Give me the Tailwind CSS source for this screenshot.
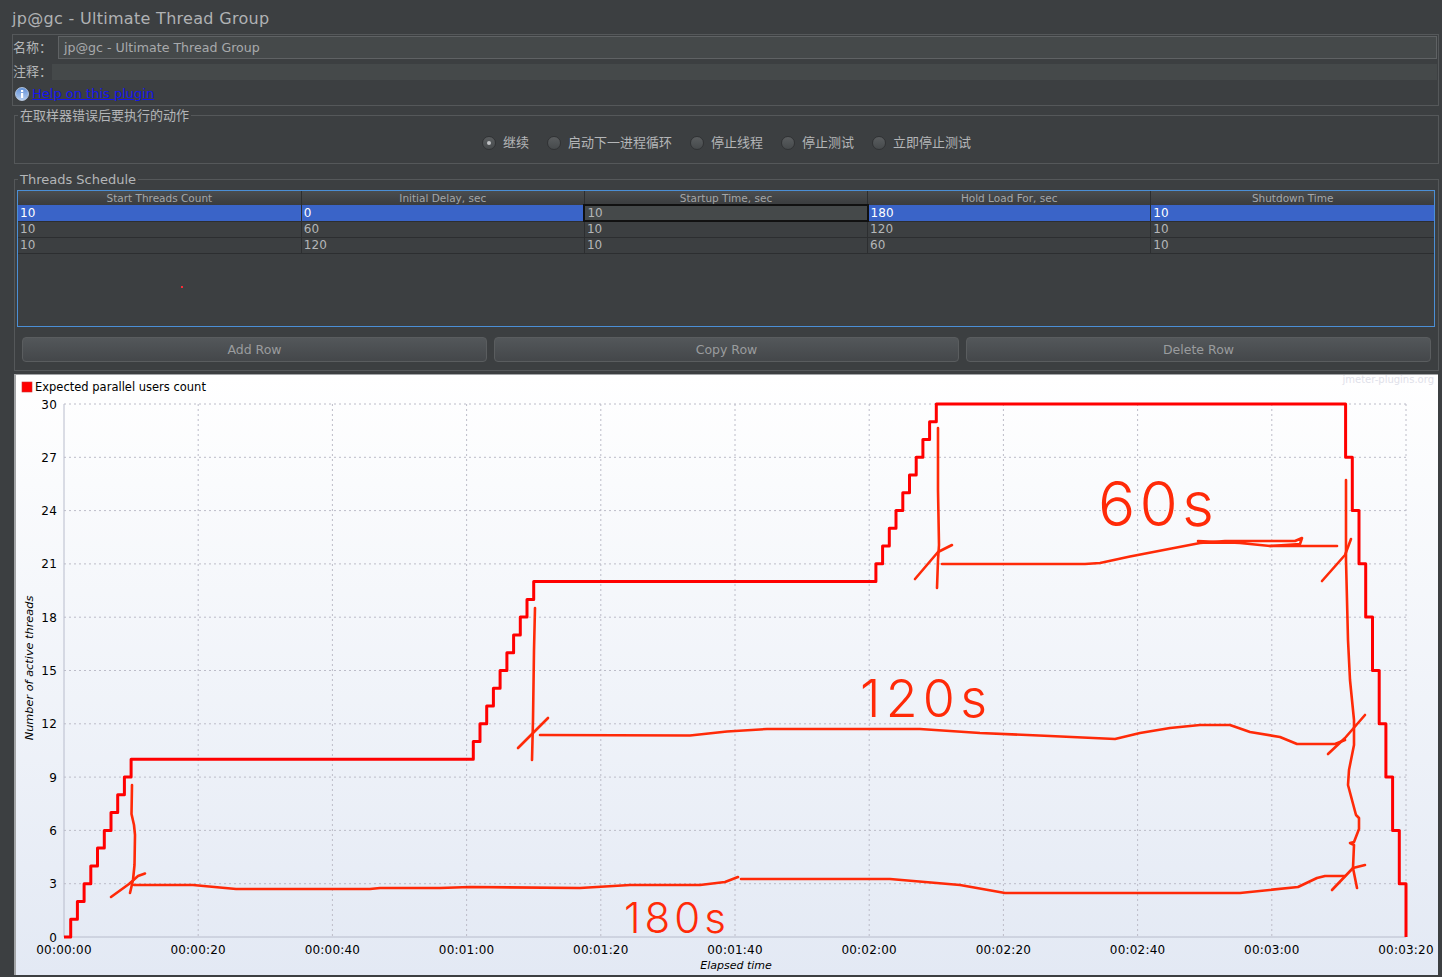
<!DOCTYPE html>
<html lang="zh">
<head>
    <meta charset="UTF-8">
    <title>jp@gc - Ultimate Thread Group</title>
    <script src="https://cdn.jsdelivr.net/npm/@tailwindcss/browser@4"></script>
</head>
<body class="w-[1442px] h-[977px] overflow-hidden bg-[#3c3f41] text-[#b4b6b8] font-['DejaVu_Sans','Noto_Sans_CJK_SC',sans-serif]">

    <!-- Title -->
    <div class="h-[34px] pl-3 pt-[3px] flex items-center text-[16px] tracking-[0.3px] text-[#b0b2b4]">jp@gc - Ultimate Thread Group</div>

    <!-- Name / comment -->
    <div class="ml-3 mr-[3px] h-[72px] border border-[#55585a] text-[13px]">
        <div class="flex items-center h-[25px] pr-px">
            <span class="w-[45px] shrink-0">名称：</span>
            <div class="flex-1 h-[23px] flex items-center pl-[5px] pt-px bg-[#45494a] border border-[#5f6264] text-[12.6px] text-[#a8aaac]">jp@gc - Ultimate Thread Group</div>
        </div>
        <div class="flex items-center h-[23px] pr-px">
            <span class="w-[39px] shrink-0">注释：</span>
            <div class="flex-1 h-4 bg-[#45494a]"></div>
        </div>
        <div class="flex items-center h-[22px] pl-[2px] gap-[3px]">
            <svg viewBox="0 0 14 14" class="w-[14px] h-[14px]">
                <defs><linearGradient id="info" x1="0" y1="0" x2="0" y2="1"><stop offset="0" stop-color="#5f8fd8"/><stop offset="1" stop-color="#b5cdee"/></linearGradient></defs>
                <circle cx="7" cy="7" r="6.5" fill="url(#info)" stroke="#c5d4ea" stroke-width="0.8"/>
                <rect x="6" y="6" width="2.2" height="5" fill="#fff"/>
                <rect x="6" y="3" width="2.2" height="2" fill="#fff"/>
            </svg>
            <a href="#" class="text-[#1414ee] underline">Help on this plugin</a>
        </div>
    </div>

    <!-- Action on sampler error -->
    <fieldset class="ml-[14px] mr-[3px] h-[57px] border border-[#55585a] mt-px">
        <legend class="ml-[3px] px-[2px] pt-[2px] text-[13px] leading-[14px]">在取样器错误后要执行的动作</legend>
        <div class="flex justify-center items-center gap-[18px] h-[26px] mt-[7px] text-[13px]">
            <label class="flex items-center gap-[7px]"><span class="w-[14px] h-[14px] rounded-full bg-gradient-to-b from-[#5a5d5f] to-[#464a4c] border border-[#303234] flex items-center justify-center"><span class="w-1 h-1 rounded-full bg-[#c0c2c4]"></span></span>继续</label>
            <label class="flex items-center gap-[7px]"><span class="w-[14px] h-[14px] rounded-full bg-gradient-to-b from-[#5a5d5f] to-[#464a4c] border border-[#303234]"></span>启动下一进程循环</label>
            <label class="flex items-center gap-[7px]"><span class="w-[14px] h-[14px] rounded-full bg-gradient-to-b from-[#5a5d5f] to-[#464a4c] border border-[#303234]"></span>停止线程</label>
            <label class="flex items-center gap-[7px]"><span class="w-[14px] h-[14px] rounded-full bg-gradient-to-b from-[#5a5d5f] to-[#464a4c] border border-[#303234]"></span>停止测试</label>
            <label class="flex items-center gap-[7px]"><span class="w-[14px] h-[14px] rounded-full bg-gradient-to-b from-[#5a5d5f] to-[#464a4c] border border-[#303234]"></span>立即停止测试</label>
        </div>
    </fieldset>

    <!-- Threads schedule -->
    <fieldset class="ml-[14px] mr-[3px] h-[200px] border border-[#55585a] mt-[7px] relative">
        <legend class="ml-[3px] px-[2px] pt-[2px] text-[13px] leading-[14px]">Threads Schedule</legend>
        <div class="ml-[2px] mr-[3px] mt-[3px] h-[137px] border-[1.5px] border-[#4b8fd6]">
            <table class="w-full table-fixed border-collapse text-[12px] leading-[14px] tracking-[0.1px]">
                <thead>
                    <tr class="h-[14px] text-[10.5px] leading-[12px] tracking-normal text-[#a4a6a8] bg-gradient-to-b from-[#4a4d4f] to-[#3a3c3e]">
                        <th class="font-normal border-r border-[#2c2e30]">Start Threads Count</th>
                        <th class="font-normal border-r border-[#2c2e30]">Initial Delay, sec</th>
                        <th class="font-normal border-r border-[#2c2e30]">Startup Time, sec</th>
                        <th class="font-normal border-r border-[#2c2e30]">Hold Load For, sec</th>
                        <th class="font-normal">Shutdown Time</th>
                    </tr>
                </thead>
                <tbody>
                    <tr class="h-4 text-white bg-[#3a64c8] border-b border-[#2c2e30]">
                        <td class="pl-[2px] py-0 border-r border-[#2c2e30]">10</td>
                        <td class="pl-[2px] py-0 border-r border-[#2c2e30]">0</td>
                        <td class="pl-[2px] py-0 bg-[#45494a] border-2 border-[#111] text-[#b4b6b8]">10</td>
                        <td class="pl-[2px] py-0 border-r border-[#2c2e30]">180</td>
                        <td class="pl-[2px] py-0">10</td>
                    </tr>
                    <tr class="h-4 border-b border-[#2c2e30]">
                        <td class="pl-[2px] py-0 border-r border-[#2c2e30]">10</td>
                        <td class="pl-[2px] py-0 border-r border-[#2c2e30]">60</td>
                        <td class="pl-[2px] py-0 border-r border-[#2c2e30]">10</td>
                        <td class="pl-[2px] py-0 border-r border-[#2c2e30]">120</td>
                        <td class="pl-[2px] py-0">10</td>
                    </tr>
                    <tr class="h-4 border-b border-[#2c2e30]">
                        <td class="pl-[2px] py-0 border-r border-[#2c2e30]">10</td>
                        <td class="pl-[2px] py-0 border-r border-[#2c2e30]">120</td>
                        <td class="pl-[2px] py-0 border-r border-[#2c2e30]">10</td>
                        <td class="pl-[2px] py-0 border-r border-[#2c2e30]">60</td>
                        <td class="pl-[2px] py-0">10</td>
                    </tr>
                </tbody>
            </table>
        </div>
        <span class="absolute left-[166px] top-[99px] w-[2px] h-[2px] bg-red-500"></span>
        <div class="flex gap-[7px] mt-[10px] ml-[7px] mr-[7px] text-[12.5px] text-[#9a9c9e]">
            <button class="flex-1 h-[25px] pt-px rounded-[4px] border border-[#5a5d5f] bg-gradient-to-b from-[#53575a] to-[#44474a]">Add Row</button>
            <button class="flex-1 h-[25px] pt-px rounded-[4px] border border-[#5a5d5f] bg-gradient-to-b from-[#53575a] to-[#44474a]">Copy Row</button>
            <button class="flex-1 h-[25px] pt-px rounded-[4px] border border-[#5a5d5f] bg-gradient-to-b from-[#53575a] to-[#44474a]">Delete Row</button>
        </div>
    </fieldset>

    <!-- Chart -->
    <div class="ml-[14px] mt-[3px] w-[1424px] h-[601px] border-l-2 border-t border-[#a2a4a6]">
        <svg id="chart" viewBox="16 375 1422 600" class="block w-[1422px] h-[600px]">
            <defs>
                <linearGradient id="plot" x1="0" y1="0" x2="0" y2="1">
                    <stop offset="0" stop-color="#ffffff"/>
                    <stop offset="1" stop-color="#e3e9f4"/>
                </linearGradient>
            </defs>
            <rect x="16" y="375" width="1422" height="600" fill="url(#plot)"/>
            <g id="grid" fill="none" stroke="#bcbcc8" stroke-dasharray="2 3"></g>
            <path d="M64 404V937H1406" fill="none" stroke="#b8bccc"/>
            <g id="labels" class="fill-black text-[12px] tracking-[0.2px]"></g>

            <rect x="22" y="382" width="10" height="10" fill="#f00" stroke="#c33" stroke-width="0.6"/>
            <text x="35" y="391" class="fill-black text-[11.5px]">Expected parallel users count</text>
            <text x="1434" y="383" text-anchor="end" class="fill-[#dfe1ea] text-[10px]">jmeter-plugins.org</text>
            <text transform="translate(33 668) rotate(-90)" text-anchor="middle" class="fill-black italic text-[11.3px]">Number of active threads</text>
            <text x="736" y="969" text-anchor="middle" class="fill-black italic text-[11px]">Elapsed time</text>

            <path id="users" fill="none" stroke="#f00" stroke-width="3" stroke-linejoin="round"/>

            <!-- Marks drawn over the chart -->
            <g fill="none" stroke="#ff2a08" stroke-width="2.6" stroke-linecap="round" stroke-linejoin="round">
                <polyline points="132,785 131.5,814 134,825 135,835 134.5,865 133,880 130,893"/>
                <polyline points="111,897 129,884 138,876 145,873.5"/>
                <polyline points="134,885 193,885 236,889 300,889 370,889 380,888 440,888 470,887 580,888 630,885 700,885 725,882 738,877"/>
                <polyline points="741,879 890,879 960,885 1005,893 1240,893 1298,887 1317,878 1325,876 1345,876"/>
                <polyline points="1332,890 1353,868 1365,865"/>
                <polyline points="1346,480 1346,560 1348,640 1350,680 1354,720 1354,745 1349,770 1348,785 1352,800 1356,815 1359,818 1359,829 1354,842 1350,843 1354,845 1353,868 1357,888"/>

                <polyline points="535,608 534,650 533,720 532,760"/>
                <polyline points="518,748 533,733 548,718"/>
                <polyline points="540,735 690,735.5 727,731.5 767,729 920,729 980,733 1050,736 1115,739 1140,733 1170,728 1200,725 1230,725 1250,732 1280,737 1297,744 1335,744 1345,740"/>
                <polyline points="1328,754 1345,738 1365,715"/>

                <polyline points="938,428 938,490 939,545 938,560 937,588"/>
                <polyline points="915,579 938,552 950,546 952,545"/>
                <polyline points="942,564 1030,564 1085,564 1100,563 1130,556.5 1200,543 1225,541 1260,541 1295,541 1302,538 1300,544 1270,546 1240,543 1198,541"/>
                <polyline points="1270,546 1337,546"/>
                <polyline points="1322,581 1345,555 1351,539"/>
            </g>
            <g class="fill-[#ff2a08] font-['Inter',sans-serif] font-light">
                <text x="624" y="933" textLength="102" class="text-[42px]">180s</text>
                <text x="860" y="717" textLength="127" class="text-[52px]">120s</text>
                <text x="1098" y="526" textLength="116" class="text-[62px]">60s</text>
            </g>
        </svg>
    </div>

    <script>
        // Plot area: 20s = 134.2px on x, 3 threads = 53.3px on y
        const x0 = 64, yBottom = 937, pxPerSec = 6.71, pxPerThread = 17.77;
        const px = s => (x0 + s * pxPerSec).toFixed(1);
        const py = n => (yBottom - n * pxPerThread).toFixed(1);

        let grid = '', labels = '';
        for (let i = 0; i <= 10; i++) {
            const x = x0 + i * 134.2, total = i * 20;
            const m = String(Math.floor(total / 60)).padStart(2, '0');
            const s = String(total % 60).padStart(2, '0');
            if (i > 0) grid += `<path d="M${x} 404V937"/>`;
            labels += `<text x="${x}" y="954" text-anchor="middle">00:${m}:${s}</text>`;
        }
        for (let i = 0; i <= 10; i++) {
            const y = 937 - i * 53.3;
            if (i > 0) grid += `<path d="M64 ${y}H1406"/>`;
            labels += `<text x="57" y="${y + 4.5}" text-anchor="end">${i * 3}</text>`;
        }
        document.getElementById('grid').innerHTML = grid;
        document.getElementById('labels').innerHTML = labels;

        // Expected parallel users: three ramps of 10 threads, then shutdown
        let d = `M${x0} ${py(0)}`;
        let users = 0;
        [0, 60, 120].forEach(start => {
            for (let t = 1; t <= 10; t++) {
                d += `H${px(start + t)}V${py(++users)}`;
            }
        });
        for (let t = 0; t < 10; t++) {
            users -= 3;
            d += `H${px(191 + t)}V${py(users)}`;
        }
        document.getElementById('users').setAttribute('d', d);
    </script>
</body>
</html>
